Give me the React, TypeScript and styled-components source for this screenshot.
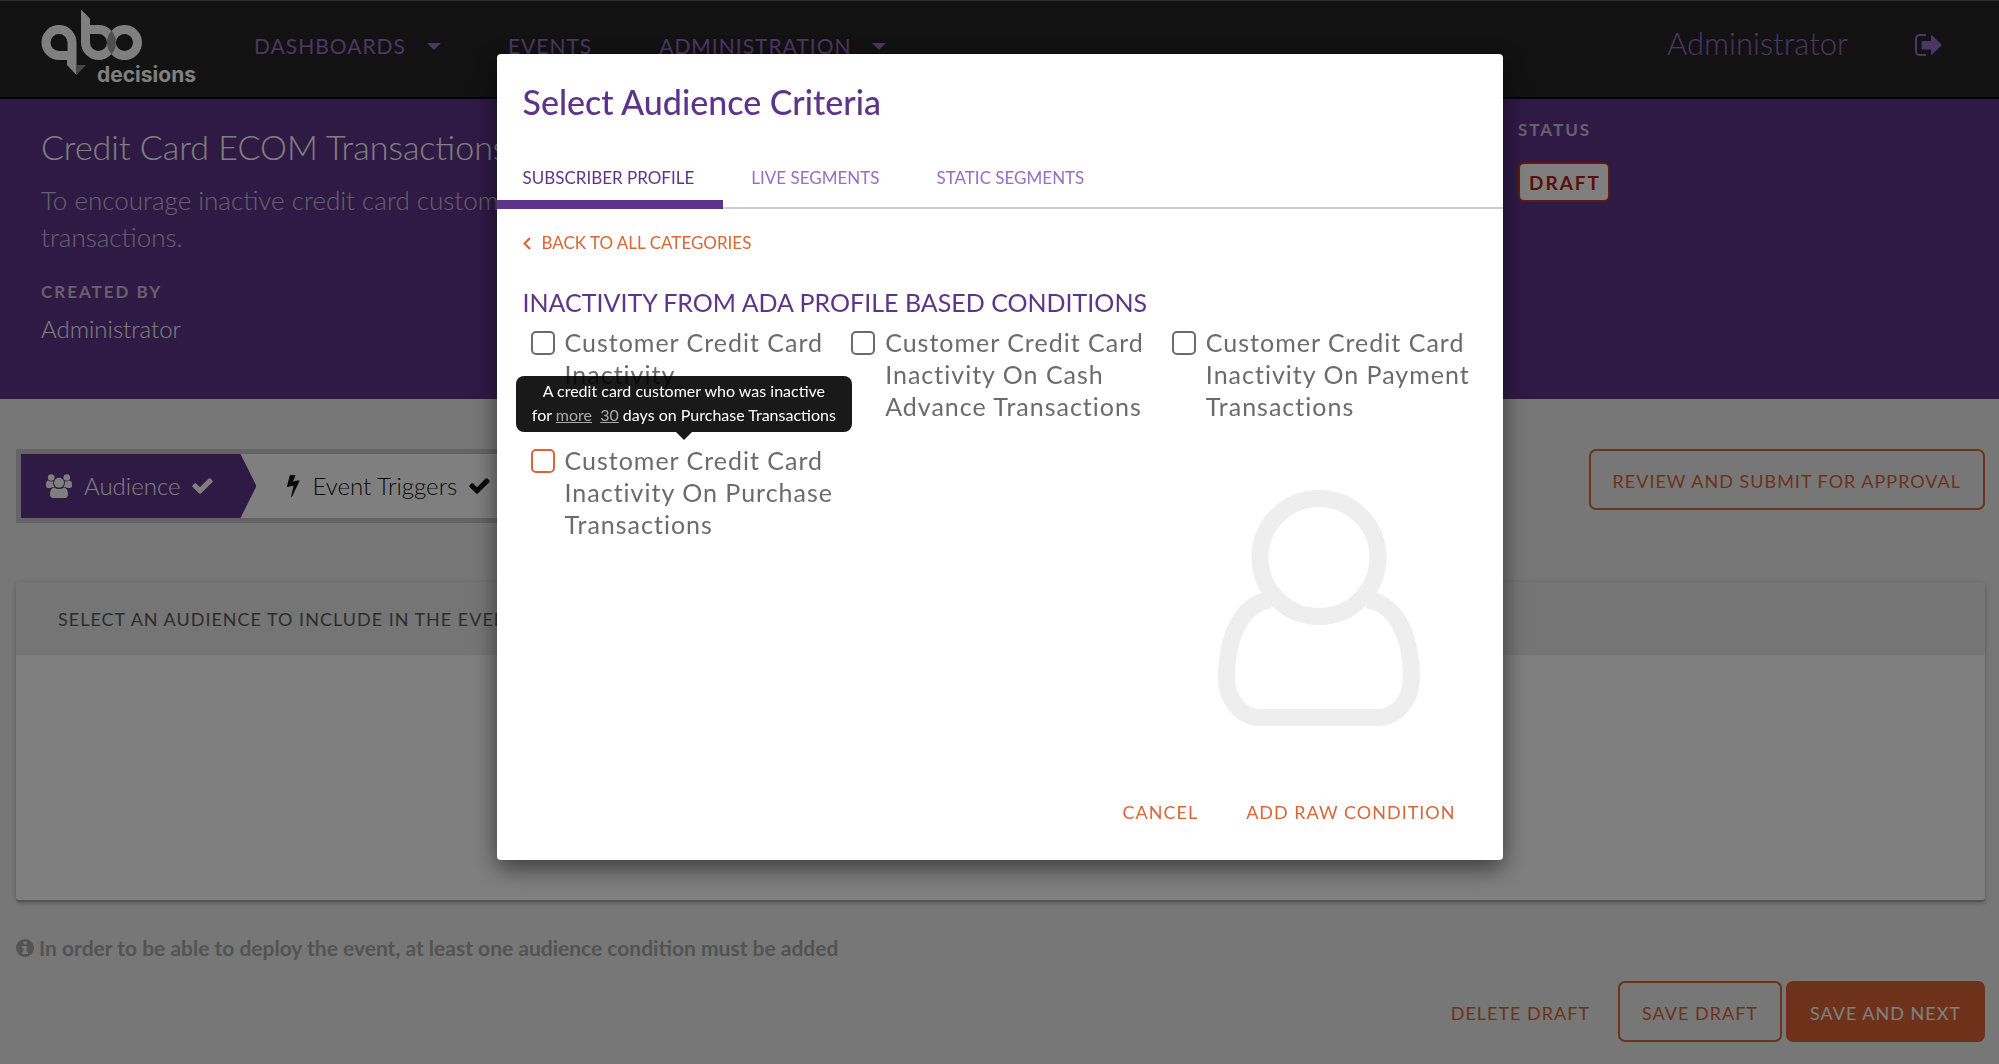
import React from "react";
import styled, { createGlobalStyle, css } from "styled-components";

const color = {
  purple: "#5e348a",
  lilac: "#966ec6",
  orange: "#dc6537",
  ink: "#242424",
  grey: "#eeeeee",
};

const GlobalStyle = createGlobalStyle`
  *, *::before, *::after { box-sizing: border-box; }
  body { margin: 0; background: ${color.grey}; font-family: Lato, "Open Sans", sans-serif; }
  h1, h2, h3, p, ul, dl, dd { margin: 0; padding: 0; }
  ul { list-style: none; }
  button { font-family: inherit; cursor: pointer; }
`;

/* ---------- top bar ---------- */

const TopBar = styled.header`
  display: flex;
  align-items: center;
  height: 99px;
  padding: 0 57px 6px 41px;
  background: ${color.ink};
  border-top: 1px solid #5a5a5a;
  border-bottom: 2px solid #000;
`;

const Brand = styled.a`
  display: flex;
  flex-direction: column;
  width: 153px;
  padding-top: 4px;
  color: #fff;
  text-decoration: none;
`;

const BrandName = styled.span`
  margin: -13px 0 0 56px;
  font: 700 21px/24px Inter, sans-serif;
`;

const Nav = styled.nav`
  display: flex;
  flex: 1;
  gap: 67px;
  margin-left: 60px;
`;

const NavLink = styled.a`
  display: flex;
  align-items: center;
  gap: 21px;
  color: ${color.lilac};
  font-size: 21px;
  line-height: 28px;
  letter-spacing: 1px;
  text-decoration: none;
`;

const Caret = styled.span`
  border: 7px solid transparent;
  border-top-color: currentColor;
  border-bottom: 0;
`;

const Account = styled.div`
  display: flex;
  align-items: center;
  gap: 67px;
  color: ${color.lilac};
  font-size: 31px;
  font-weight: 300;
  line-height: 36px;
  padding-bottom: 6px;
`;

const IconButton = styled.button`
  display: flex;
  padding: 3px 0 0;
  border: 0;
  background: none;
  color: inherit;
`;

/* ---------- hero ---------- */

const Hero = styled.section`
  display: grid;
  grid-template-columns: 1477px 1fr;
  padding: 19px 41px 55px;
  background: ${color.purple};
  color: #fff;
`;

const HeroTitle = styled.h1`
  margin-top: 8px;
  font-size: 34px;
  font-weight: 300;
  line-height: 42px;
`;

const HeroText = styled.p`
  max-width: 580px;
  margin: 14px 0 24px;
  color: rgba(255, 255, 255, 0.7);
  font-size: 26px;
  font-weight: 300;
  line-height: 37px;
`;

const Caption = styled.h2`
  color: rgba(255, 255, 255, 0.7);
  font-size: 17px;
  font-weight: 700;
  line-height: 24px;
  letter-spacing: 2px;
`;

const Creator = styled.p`
  margin-top: 10px;
  font-size: 24px;
  font-weight: 300;
  line-height: 30px;
`;

const Badge = styled.span`
  display: inline-block;
  margin-top: 20px;
  padding: 1px 7px 0 9px;
  border: 2px solid #c4301c;
  border-radius: 6px;
  background: #fff;
  color: #b41a14;
  font-size: 19px;
  font-weight: 700;
  line-height: 35px;
  letter-spacing: 2px;
`;

/* ---------- page body ---------- */

const Main = styled.main`
  padding: 50px 14px 22px 16px;
`;

const Toolbar = styled.div`
  display: flex;
  justify-content: space-between;
  align-items: flex-start;
`;

const Steps = styled.ul`
  display: flex;
  width: 52%;
  border: 5px solid #c8c8c8;
  background: #fff;
`;

const Step = styled.li<{ $active?: boolean }>`
  display: flex;
  align-items: center;
  gap: 12px;
  height: 64px;
  padding: 0 43px 0 25px;
  color: ${(p) => (p.$active ? "#fff" : "#111")};
  font-size: 24px;
  font-weight: 300;
  line-height: 30px;
  ${(p) =>
    p.$active &&
    css`
      margin-right: 6px;
      background: ${color.purple};
      clip-path: polygon(0 0, calc(100% - 16px) 0, 100% 50%, calc(100% - 16px) 100%, 0 100%);
    `}
`;

const Button = styled.button<{ $kind?: "outline" | "solid" | "text" }>`
  height: 61px;
  padding: 2px 22px 0;
  border: 2px solid ${(p) => (p.$kind === "text" ? "transparent" : color.orange)};
  border-radius: 7px;
  background: ${(p) => (p.$kind === "solid" ? color.orange : "transparent")};
  color: ${(p) => (p.$kind === "solid" ? "#fff" : color.orange)};
  font-size: 18px;
  line-height: 24px;
  letter-spacing: 1px;
`;

const Panel = styled.section`
  margin-top: 59px;
  border-bottom: 2px solid #a8a8a8;
  border-radius: 4px;
  background: #fff;
  box-shadow: 0 1px 4px rgba(0, 0, 0, 0.25);
`;

const PanelTitle = styled.h2`
  padding: 25px 42px 24px;
  background: #ebebeb;
  color: #5a5a5a;
  font-size: 18px;
  font-weight: 400;
  line-height: 24px;
  letter-spacing: 1px;
`;

const PanelBody = styled.div`
  height: 245px;
`;

const Hint = styled.p`
  display: flex;
  align-items: center;
  gap: 5px;
  margin-top: 32px;
  color: #a6a6a6;
  font-size: 21px;
  font-weight: 700;
  line-height: 28px;
`;

const Actions = styled.div`
  display: flex;
  justify-content: flex-end;
  gap: 4px;
  margin-top: 19px;
`;

/* ---------- dialog ---------- */

const Backdrop = styled.div`
  position: fixed;
  inset: 0;
  display: flex;
  justify-content: center;
  align-items: flex-start;
  padding-top: 54px;
  background: rgba(0, 0, 0, 0.5);
`;

const Dialog = styled.div`
  width: 1006px;
  max-width: 96%;
  padding: 27px 0 18px;
  border-radius: 4px;
  background: #fff;
  box-shadow: 0 8px 25px rgba(0, 0, 0, 0.55);
`;

const DialogTitle = styled.h2`
  padding: 0 26px;
  color: ${color.purple};
  font-size: 34px;
  font-weight: 500;
  line-height: 42px;
`;

const Tabs = styled.div`
  display: flex;
  gap: 2px;
  margin-top: 26px;
  border-bottom: 2px solid #ccc;
`;

const Tab = styled.button<{ $active?: boolean }>`
  margin-bottom: -2px;
  padding: 17px 29px 10px 26px;
  border: 0;
  border-bottom: 9px solid ${(p) => (p.$active ? color.purple : "transparent")};
  background: none;
  color: ${(p) => (p.$active ? color.purple : color.lilac)};
  font-size: 17px;
  line-height: 24px;
`;

const BackLink = styled.a`
  display: inline-flex;
  align-items: center;
  gap: 11px;
  margin: 22px 26px 0;
  color: ${color.orange};
  font-size: 17px;
  line-height: 24px;
  text-decoration: none;
`;

const GroupTitle = styled.h3`
  margin-top: 31px;
  padding: 0 26px;
  color: ${color.purple};
  font-size: 25px;
  font-weight: 400;
  line-height: 32px;
`;

const Options = styled.div`
  display: grid;
  grid-template-columns: repeat(3, 1fr);
  gap: 22px 0;
  align-items: start;
  margin-top: 8px;
  padding: 0 10px 0 34px;
`;

const Option = styled.div`
  position: relative;
  display: flex;
  align-items: flex-start;
  gap: 10px;
  margin-right: 14px;
`;

const CheckBox = styled.input<{ $hot?: boolean }>`
  flex: none;
  appearance: none;
  width: 24px;
  height: 24px;
  margin: 5px 0 0;
  border: 2px solid ${(p) => (p.$hot ? color.orange : "#6b6b6b")};
  border-radius: 5px;
  background: #fff;
`;

const OptionLabel = styled.label`
  color: #6b6b6b;
  font-size: 25px;
  line-height: 32px;
  letter-spacing: 1px;
`;

const Tooltip = styled.div`
  position: absolute;
  left: 50%;
  bottom: calc(100% + 12px);
  width: 336px;
  padding: 3px 10px 5px;
  border-radius: 8px;
  transform: translateX(-50%);
  background: rgba(0, 0, 0, 0.9);
  color: #fff;
  font-size: 16px;
  line-height: 24px;
  text-align: center;

  &::after {
    content: "";
    position: absolute;
    top: 100%;
    left: calc(50% - 8px);
    border: 8px solid transparent;
    border-top-color: rgba(0, 0, 0, 0.9);
    border-bottom: 0;
  }
`;

const Param = styled.u`
  color: #aaa;
`;

const Figure = styled.svg`
  grid-column: 3;
  margin: 46px 0 0 46px;
`;

const DialogFooter = styled.div`
  display: flex;
  justify-content: flex-end;
  margin-top: 56px;
  padding: 0 23px;
`;

const TextButton = styled.button`
  padding: 18px 24px;
  border: 0;
  background: none;
  color: ${color.orange};
  font-size: 18px;
  line-height: 24px;
  letter-spacing: 1px;
`;

/* ---------- drawings ---------- */

const LogoMark = () => (
  <svg width="102" height="67" viewBox="41 10 102 67" aria-hidden="true">
    <g fill="#fff" fillRule="evenodd">
      <path d="M76.500 43.500a17.500 17.500 0 1 0-17.500 17.500h8v5l9.500 10zM67.500 43.500a8.500 8.500 0 1 0-8.500 8.500h8.500z" />
      <path d="M81 10.500l9 9v6.500h8.500a17.500 17.500 0 1 1-17.500 17.500zM90 35v8.500a8.500 8.500 0 1 0 8.500-8.500z" />
      <path d="M124.500 26a17.500 17.500 0 1 0 .01 0zM124.500 35a8.500 8.500 0 1 1-.01 0z" />
    </g>
    <path d="M111.500 31.800a17.500 17.500 0 0 1 0 23.400a17.500 17.500 0 0 1 0-23.400z" fill="#9c9c9c" />
    <path d="M76.500 66h9.500l-9.500 10z" fill="#8a8a8a" />
  </svg>
);

const SignOutIcon = () => (
  <svg width="27" height="22" viewBox="0 0 27 22" fill="none" aria-hidden="true">
    <path d="M11 1H5Q1 1 1 5v12q0 4 4 4h6" stroke="currentColor" strokeWidth="2" />
    <path d="M7.500 7h8.500V2.500q0-2 1.500-.8l8.800 8.600q.8.700 0 1.400l-8.800 8.600q-1.500 1.200-1.500-.8V15.500H7.500q-1 0-1-1V8q0-1 1-1z" fill="currentColor" />
  </svg>
);

const UsersIcon = () => (
  <svg width="26" height="24" viewBox="0 0 26 24" fill="currentColor" aria-hidden="true">
    <circle cx="5.200" cy="3.500" r="3.300" />
    <circle cx="20.800" cy="3.500" r="3.300" />
    <path d="M2 6.500q3.200 2 5.200.4Q6.300 10 8.500 13 6 13.200 4.500 14H2.500Q0 14 0 11.500 0 7 2 6.500zM24 6.500q-3.200 2-5.200.4.900 3.100-1.300 6.100 2.500.2 4 1h2Q26 14 26 11.500 26 7 24 6.500z" />
    <circle cx="13" cy="8.700" r="5" />
    <path d="M8 13.500q5 3 10 0 4 1 4 7 0 3.500-3.500 3.500h-11Q4 24 4 20.500q0-6 4-7z" />
  </svg>
);

const CheckIcon = () => (
  <svg width="21" height="16" viewBox="0 0 21 16" fill="currentColor" aria-hidden="true">
    <path d="M8.900 15.400Q8 16.200 7.100 15.400L.6 9q-.8-.9 0-1.800l1.800-1.800q.9-.8 1.800 0L8 9.200 16.700.6q.9-.8 1.800 0l1.800 1.800q.8.900 0 1.800z" />
  </svg>
);

const BoltIcon = () => (
  <svg width="13" height="22" viewBox="0 0 13 22" fill="currentColor" aria-hidden="true">
    <path d="M3.300 0h4.500q.8.100.5.900L6 6.600l5.800-1.300q.9 0 .6.900L5.200 21.500q-1.200.8-1-.4l2.400-10.500L.7 12Q-.1 12 0 11.200L2.700.5Q2.800 0 3.300 0z" />
  </svg>
);

const InfoIcon = () => (
  <svg width="18" height="18" viewBox="0 0 18 18" aria-hidden="true">
    <circle cx="9" cy="9" r="9" fill="currentColor" />
    <path d="M7.500 2.500h3.200v2.800H7.500zM6.200 7h4.500v5.700H12V15H6.200v-2.300h1.300V9.200H6.200z" fill="#eee" />
  </svg>
);

const ChevronIcon = () => (
  <svg width="8" height="13" viewBox="0 0 8 13" fill="none" aria-hidden="true">
    <path d="M7 1L1.500 6.500 7 12" stroke="currentColor" strokeWidth="2" />
  </svg>
);

const PersonFigure = () => (
  <Figure width="202" height="236" viewBox="0 0 202 236" fill="none" stroke="#eee" strokeWidth="17" aria-hidden="true">
    <circle cx="101" cy="67.500" r="59" />
    <path d="M53 110C26 112 8.500 144 8.500 188c0 22 15 39.500 34 39.500h117c19 0 34-17.500 34-39.500 0-44-17.500-76-44.500-78" />
  </Figure>
);

const options = [
  { id: "inactivity", label: "Customer Credit Card Inactivity" },
  { id: "cash", label: "Customer Credit Card Inactivity On Cash Advance Transactions" },
  { id: "payment", label: "Customer Credit Card Inactivity On Payment Transactions" },
  { id: "purchase", label: "Customer Credit Card Inactivity On Purchase Transactions", hot: true },
];

export default function App() {
  return (
    <>
      <GlobalStyle />
      <TopBar>
        <Brand href="#">
          <LogoMark />
          <BrandName>decisions</BrandName>
        </Brand>
        <Nav>
          <NavLink href="#">DASHBOARDS <Caret /></NavLink>
          <NavLink href="#">EVENTS</NavLink>
          <NavLink href="#">ADMINISTRATION <Caret /></NavLink>
        </Nav>
        <Account>
          <span>Administrator</span>
          <IconButton aria-label="Sign out"><SignOutIcon /></IconButton>
        </Account>
      </TopBar>

      <Hero>
        <div>
          <HeroTitle>Credit Card ECOM Transactions</HeroTitle>
          <HeroText>To encourage inactive credit card customers transactions.</HeroText>
          <Caption>CREATED BY</Caption>
          <Creator>Administrator</Creator>
        </div>
        <div>
          <Caption>STATUS</Caption>
          <Badge>DRAFT</Badge>
        </div>
      </Hero>

      <Main>
        <Toolbar>
          <Steps>
            <Step $active><UsersIcon />Audience<CheckIcon /></Step>
            <Step><BoltIcon />Event Triggers<CheckIcon /></Step>
          </Steps>
          <Button $kind="outline">REVIEW AND SUBMIT FOR APPROVAL</Button>
        </Toolbar>
        <Panel>
          <PanelTitle>SELECT AN AUDIENCE TO INCLUDE IN THE EVENT</PanelTitle>
          <PanelBody />
        </Panel>
        <Hint>
          <InfoIcon />
          In order to be able to deploy the event, at least one audience condition must be added
        </Hint>
        <Actions>
          <Button $kind="text">DELETE DRAFT</Button>
          <Button $kind="outline">SAVE DRAFT</Button>
          <Button $kind="solid">SAVE AND NEXT</Button>
        </Actions>
      </Main>

      <Backdrop>
        <Dialog role="dialog" aria-modal="true" aria-labelledby="dialog-title">
          <DialogTitle id="dialog-title">Select Audience Criteria</DialogTitle>
          <Tabs role="tablist">
            <Tab role="tab" aria-selected="true" $active>SUBSCRIBER PROFILE</Tab>
            <Tab role="tab" aria-selected="false">LIVE SEGMENTS</Tab>
            <Tab role="tab" aria-selected="false">STATIC SEGMENTS</Tab>
          </Tabs>
          <BackLink href="#"><ChevronIcon />BACK TO ALL CATEGORIES</BackLink>
          <GroupTitle>INACTIVITY FROM ADA PROFILE BASED CONDITIONS</GroupTitle>
          <Options>
            {options.map((o) => (
              <Option key={o.id}>
                <CheckBox type="checkbox" id={o.id} $hot={o.hot} />
                <OptionLabel htmlFor={o.id}>{o.label}</OptionLabel>
                {o.hot && (
                  <Tooltip role="tooltip">
                    A credit card customer who was inactive
                    <br />
                    for <Param>more</Param>&nbsp; <Param>30</Param> days on Purchase Transactions
                  </Tooltip>
                )}
              </Option>
            ))}
            <PersonFigure />
          </Options>
          <DialogFooter>
            <TextButton>CANCEL</TextButton>
            <TextButton>ADD RAW CONDITION</TextButton>
          </DialogFooter>
        </Dialog>
      </Backdrop>
    </>
  );
}
